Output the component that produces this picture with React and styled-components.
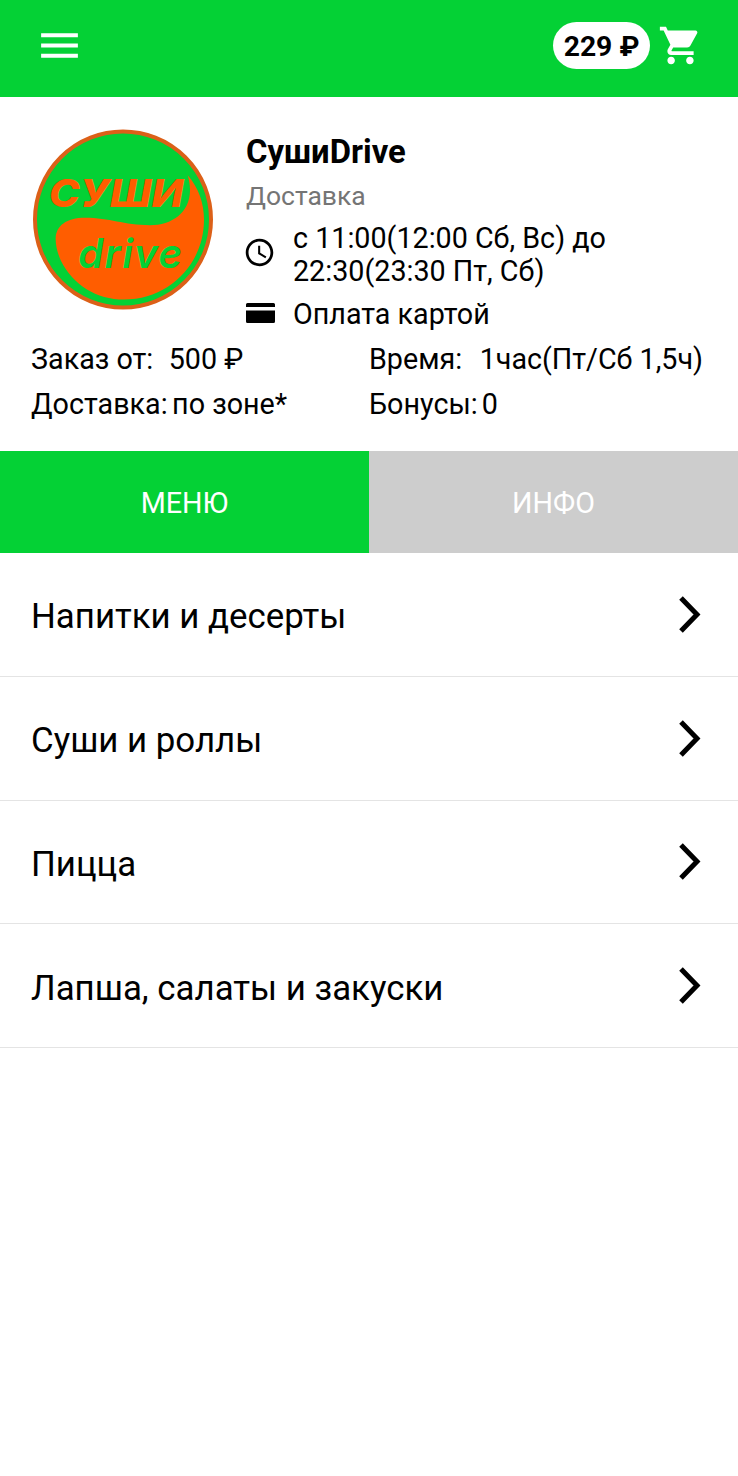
import React from "react";
import styled, { createGlobalStyle } from "styled-components";
import { MdMenu, MdShoppingCart, MdAccessTime } from "react-icons/md";

const GlobalStyle = createGlobalStyle`
* { box-sizing: border-box; }
body {
  margin: 0;
  background: #fff;
  color: #000;
  font-family: Roboto, "Noto Sans", sans-serif;
}
`;

const Page = styled.div`
  width: 100%;
  min-height: 1476px;
  background: #fff;
`;

const Header = styled.header`
  height: 97px;
  padding: 21px 35px 0 35px;
  display: flex;
  align-items: flex-start;
  justify-content: space-between;
  background: #04d135;
  color: #fff;
`;

const MenuIcon = styled(MdMenu)`
  width: 49px;
  height: 49px;
`;

const Cart = styled.div`
  display: flex;
  align-items: center;
  gap: 8px;
  padding-top: 1px;
`;

const Total = styled.div`
  width: 97px;
  height: 47px;
  border-radius: 24px;
  background: #fff;
  color: #000;
  font-size: 28.3px;
  font-weight: 700;
  line-height: 50px;
  text-align: center;
  white-space: nowrap;
`;

const CartIcon = styled(MdShoppingCart)`
  width: 45px;
  height: 45px;
`;

const Shop = styled.section`
  height: 354px;
  padding: 32px 31px 0;
`;

const ShopTop = styled.div`
  display: flex;
  height: 211px;
  padding-left: 2px;
`;

const Logo = styled.svg`
  width: 180px;
  height: 181px;
  margin-right: 33px;
  flex-shrink: 0;
`;

const Name = styled.h1`
  margin: 0;
  font-size: 32.8px;
  font-weight: 700;
  line-height: 46px;
`;

const Kind = styled.div`
  color: #757575;
  font-size: 26.5px;
  line-height: 41px;
`;

const Detail = styled.div`
  display: flex;
  align-items: center;
  height: ${(props) => props.$height}px;
  font-size: 28.7px;
  line-height: 33px;
`;

const DetailIcon = styled.div`
  width: 47px;
  display: flex;
  flex-shrink: 0;
  padding-bottom: ${(props) => props.$lift}px;
`;

const DetailText = styled.div`
  padding-top: ${(props) => props.$drop}px;
`;

const ClockIcon = styled(MdAccessTime)`
  width: 33px;
  height: 33px;
  margin-left: -3px;
`;

const Stats = styled.div`
  display: grid;
  grid-template-columns: 338px 1fr;
  row-gap: 7px;
`;

const Stat = styled.div`
  display: flex;
  gap: ${(props) => props.$gap}px;
  font-size: 28.7px;
  line-height: 38px;
  white-space: nowrap;
`;

const Tabs = styled.div`
  display: flex;
  height: 102px;
`;

const Tab = styled.div`
  flex: 1;
  background: ${(props) => (props.$active ? "#04d135" : "#cdcdcd")};
  color: #fff;
  font-size: 28.7px;
  line-height: 104px;
  text-align: center;
`;

const Row = styled.div`
  height: 123.75px;
  padding: 1px 36px 0 31px;
  display: flex;
  align-items: center;
  justify-content: space-between;
  border-bottom: 1px solid #e4e4e4;
  font-size: 34.85px;
  line-height: 42px;
`;

const RowTitle = styled.span`
  padding-top: 5px;
`;

const categories = [
  "Напитки и десерты",
  "Суши и роллы",
  "Пицца",
  "Лапша, салаты и закуски",
];

const CardIcon = () => (
  <svg width="29" height="20" viewBox="0 0 29 20">
    <path d="M0 4V1.500Q0 0 1.500 0h26Q29 0 29 1.500V4zM0 7.500h29v11q0 1.500-1.500 1.500h-26Q0 20 0 18.500z" />
  </svg>
);

const Chevron = () => (
  <svg width="24" height="38" viewBox="0 0 24 38">
    <path d="M3 2L19 18.500L3 35" fill="none" stroke="#000" strokeWidth="5" />
  </svg>
);

const ShopLogo = () => (
  <Logo viewBox="39 43 540 540">
    <circle cx="309" cy="313" r="264" fill="#04d135" stroke="#dc6018" strokeWidth="12" />
    <path
      fill="#ff5d00"
      d="M503 180C536 218 552 264 552 313C552 448 446 553 312 553C230 553 158 509 122 435C112 413 107 390 107 372C107 332 140 308 195 308C270 308 310 330 390 330C455 330 510 292 510 225C510 208 507 192 503 180Z"
    />
    <text
      x="86"
      y="277"
      textLength="404"
      lengthAdjust="spacingAndGlyphs"
      fontFamily="Inter, sans-serif"
      fontSize="115"
      fontWeight="800"
      fontStyle="italic"
      fill="#ff5d00"
    >
      СУШИ
    </text>
    <text
      x="174"
      y="459"
      textLength="312"
      lengthAdjust="spacing"
      fontFamily="Inter, sans-serif"
      fontSize="122"
      fontWeight="600"
      fontStyle="italic"
      fill="#04d135"
    >
      drive
    </text>
  </Logo>
);

const App = () => {
  return (
    <Page>
      <GlobalStyle />
      <Header>
        <MenuIcon />
        <Cart>
          <Total>229 ₽</Total>
          <CartIcon />
        </Cart>
      </Header>
      <Shop>
        <ShopTop>
          <ShopLogo />
          <div>
            <Name>СушиDrive</Name>
            <Kind>Доставка</Kind>
            <Detail $height={73}>
              <DetailIcon $lift={0}>
                <ClockIcon />
              </DetailIcon>
              <DetailText $drop={4}>
                с 11:00(12:00 Сб, Вс) до
                <br />
                22:30(23:30 Пт, Сб)
              </DetailText>
            </Detail>
            <Detail $height={51}>
              <DetailIcon $lift={4}>
                <CardIcon />
              </DetailIcon>
              <DetailText $drop={0}>Оплата картой</DetailText>
            </Detail>
          </div>
        </ShopTop>
        <Stats>
          <Stat $gap={15.5}>
            <span>Заказ от:</span>
            <span>500 ₽</span>
          </Stat>
          <Stat $gap={17.5}>
            <span>Время:</span>
            <span>1час(Пт/Сб 1,5ч)</span>
          </Stat>
          <Stat $gap={4.5}>
            <span>Доставка:</span>
            <span>по зоне*</span>
          </Stat>
          <Stat $gap={4}>
            <span>Бонусы:</span>
            <span>0</span>
          </Stat>
        </Stats>
      </Shop>
      <Tabs>
        <Tab $active>МЕНЮ</Tab>
        <Tab>ИНФО</Tab>
      </Tabs>
      {categories.map((title) => (
        <Row key={title}>
          <RowTitle>{title}</RowTitle>
          <Chevron />
        </Row>
      ))}
    </Page>
  );
};

export default App;
